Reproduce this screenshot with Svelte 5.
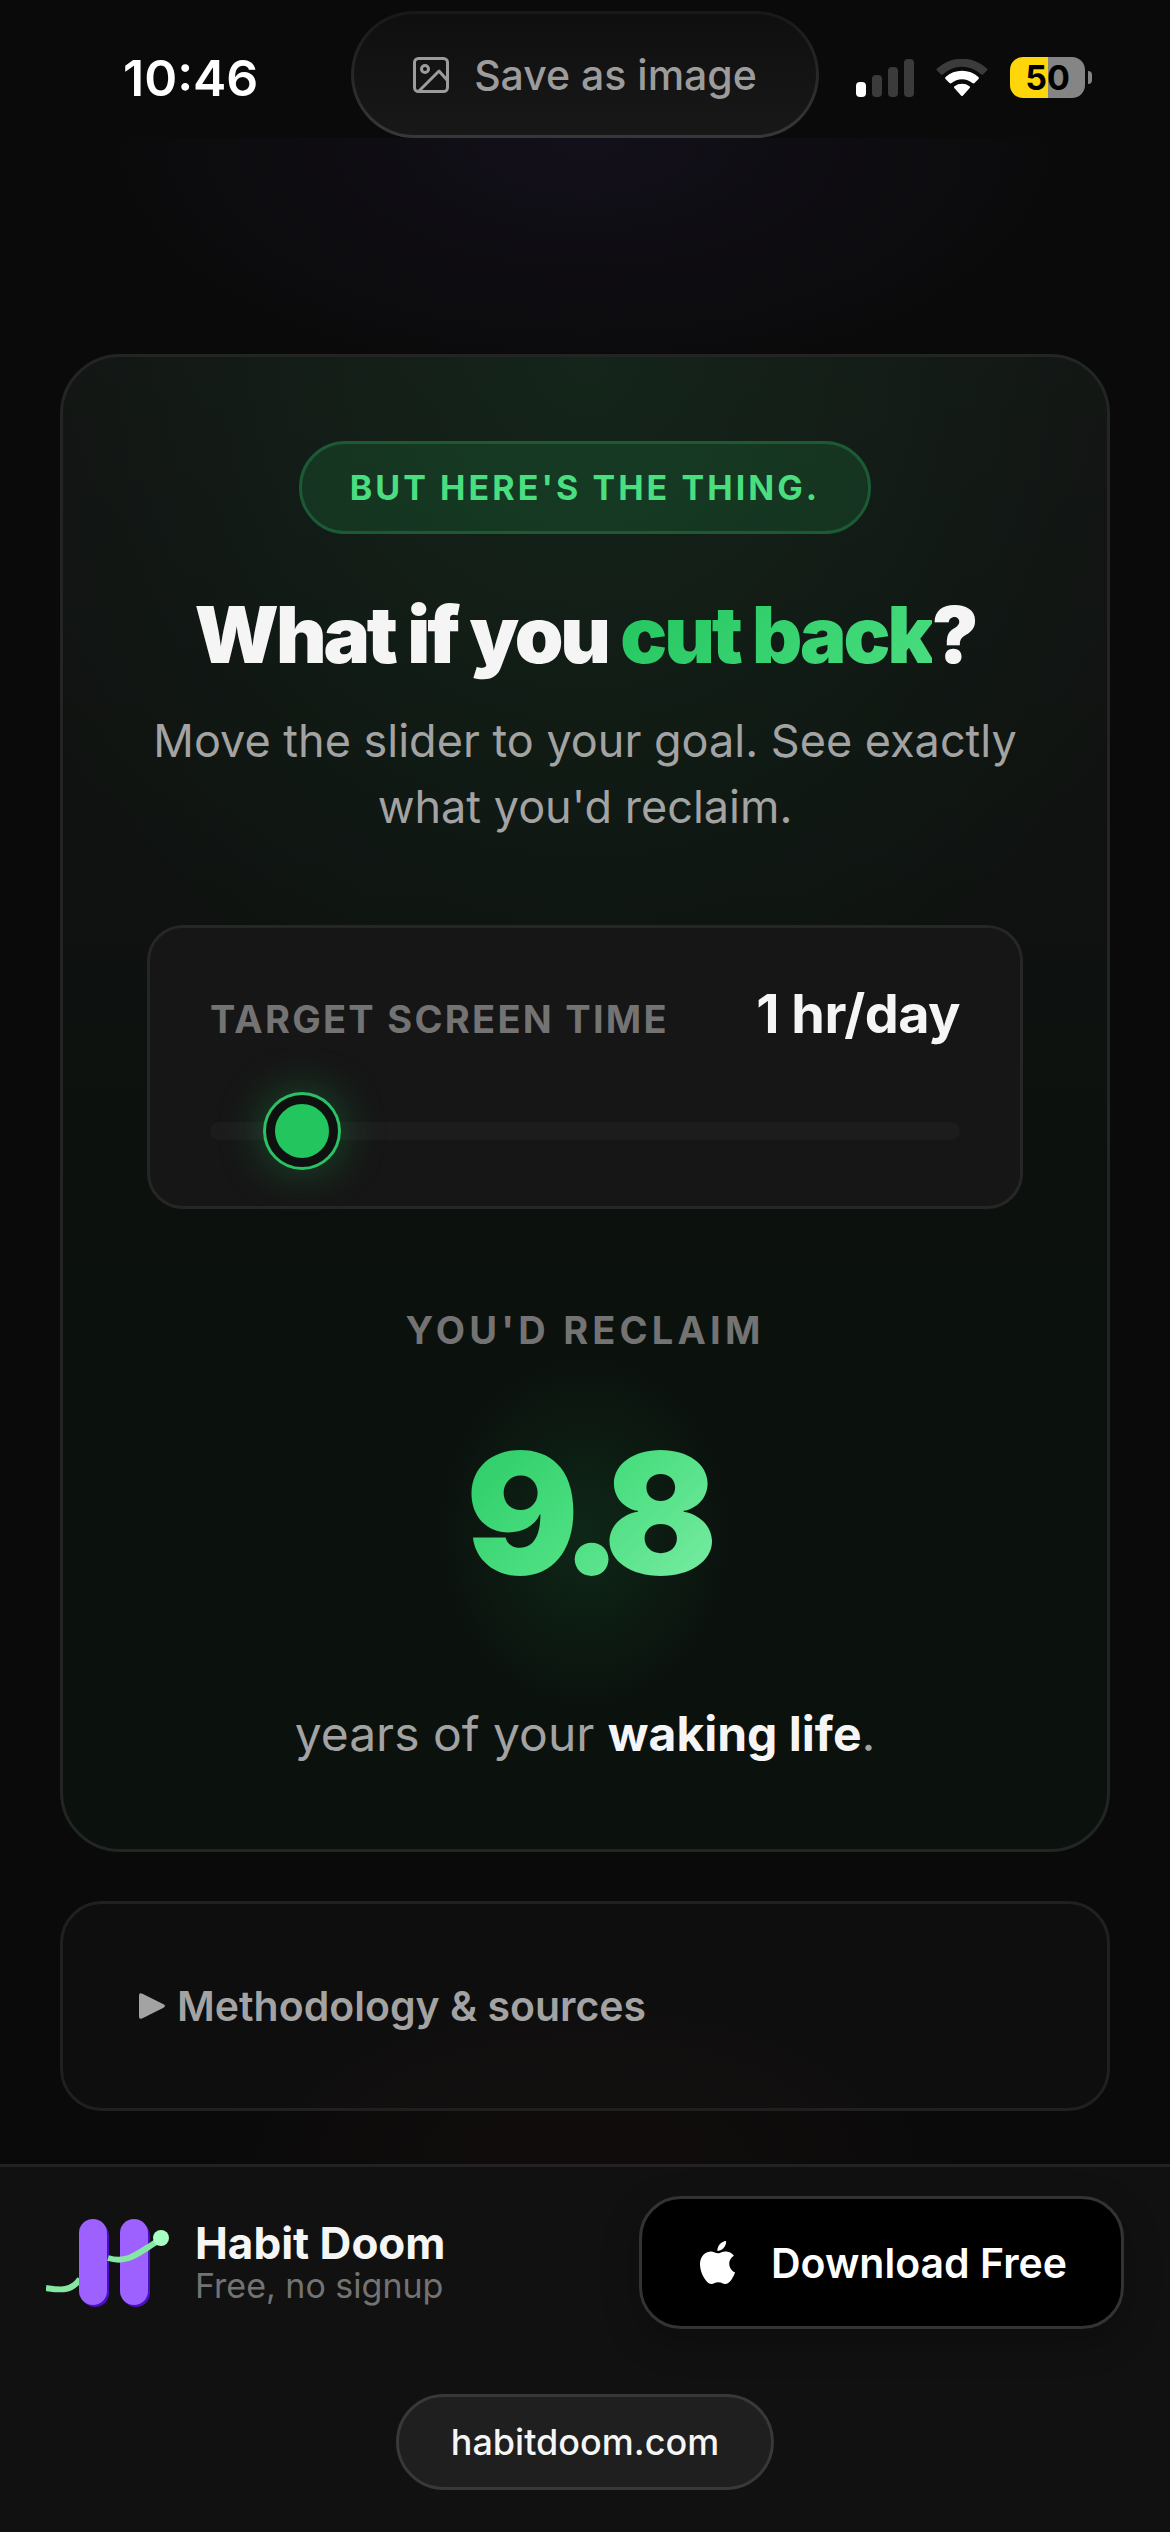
<script>
	let hours = 1;

	const current = 5.1;

	// years of waking life saved, compared with today's average
	$: reclaimed = Math.max(0, (current - hours) * 2.39).toFixed(1);
</script>

<style>
	:global(body) {
		margin: 0;
		background: #0a0a0a;
	}
	.page {
		display: flex;
		flex-direction: column;
		min-height: 100vh;
		font-family: Inter, "Liberation Sans", sans-serif;
		color: #f5f5f5;
	}

	/* Status bar */
	.status {
		display: grid;
		grid-template-columns: 1fr auto 1fr;
		align-items: center;
		padding-top: 11px;
	}
	.status-time {
		padding: 6px 0 0 123px;
		font-size: 50px;
		line-height: 60px;
		font-weight: 600;
		color: #fff;
	}
	.status-icons {
		display: flex;
		align-items: center;
		justify-content: flex-end;
		gap: 22px;
		padding: 6px 78px 0 0;
	}
	.status-icons svg {
		display: block;
	}
	.battery {
		display: flex;
		align-items: center;
		gap: 3px;
	}
	.battery-body {
		width: 75px;
		border-radius: 13px;
		background: linear-gradient(90deg, #ffd60a 51%, #858585 51%);
		color: #000;
		font-size: 34px;
		line-height: 41px;
		font-weight: 700;
		text-align: center;
	}
	.battery-tip {
		width: 4px;
		height: 13px;
		border-radius: 0 6px 6px 0;
		background: #858585;
	}
	.save {
		display: flex;
		align-items: center;
		gap: 25px;
		height: 127px;
		padding: 0 59px;
		border: 3px solid transparent;
		border-radius: 64px;
		background:
			linear-gradient(#0f0f0f, #181818) padding-box,
			linear-gradient(#181818, #383838) border-box;
		color: #9c9c9c;
		font-family: inherit;
		font-size: 41px;
		font-weight: 500;
	}

	/* Main */
	.main {
		flex: 1;
		padding: 216px 60px 53px;
		background:
			radial-gradient(ellipse 42% 250px at 50% 0, rgba(139, 92, 246, .07), transparent),
			radial-gradient(ellipse 34% 200px at 50% 100%, rgba(239, 68, 68, .03), transparent);
	}
	.card {
		display: flex;
		flex-direction: column;
		align-items: center;
		padding: 84px;
		border: 3px solid #222524;
		border-radius: 60px;
		background:
			radial-gradient(ellipse 60% 50% at 50% 0, rgba(34, 197, 94, .1), transparent),
			linear-gradient(#131313, #0c110e 55%, #0b110d);
		text-align: center;
	}
	.badge {
		padding: 21px 48px;
		border: 3px solid #1b5a35;
		border-radius: 48px;
		background: rgba(34, 197, 94, .15);
		color: #4ade80;
		font-size: 34px;
		line-height: 45px;
		font-weight: 700;
		letter-spacing: .09em;
	}
	.title {
		margin: 56px 0 0;
		font-size: 78px;
		line-height: 90px;
		font-weight: 900;
		letter-spacing: -.04em;
	}
	.title-accent {
		background: linear-gradient(135deg, #22c55e, #4ade80);
		background-clip: text;
		color: transparent;
	}
	.lead {
		margin: 28px 0 85px;
		color: #a3a3a3;
		font-size: 45px;
		line-height: 66px;
	}
	.target {
		box-sizing: border-box;
		width: 100%;
		padding: 60px 60px 66px;
		border: 3px solid #262626;
		border-radius: 36px;
		background: #161616;
	}
	.target-row {
		display: flex;
		align-items: baseline;
		justify-content: space-between;
		height: 52px;
		line-height: 52px;
	}
	.label {
		color: #737373;
		font-size: 38px;
		font-weight: 700;
		letter-spacing: .06em;
	}
	.target-value {
		font-size: 54px;
		font-weight: 700;
		letter-spacing: -.01em;
	}
	.slider {
		display: block;
		appearance: none;
		width: 100%;
		height: 18px;
		margin: 82px 0 0;
		border-radius: 9px;
		background: #1c1c1c;
		outline: none;
	}
	.slider::-webkit-slider-thumb {
		appearance: none;
		box-sizing: border-box;
		width: 72px;
		height: 72px;
		border: 9px solid #0f1110;
		border-radius: 50%;
		background: #22c55e;
		box-shadow: 0 0 0 3px #2bc266, 0 0 48px rgba(34, 197, 94, .4);
	}
	.result-label {
		margin-top: 99px;
		line-height: 44px;
		letter-spacing: .11em;
	}
	.result {
		padding: 77px 50px 106px;
		background: radial-gradient(ellipse 150px 180px at 50% 52%, rgba(34, 197, 94, .12), transparent);
	}
	.result-number {
		padding: 0 50px;
		background: linear-gradient(135deg, #22c55e, #4ade80 50%, #86efac);
		background-clip: text;
		color: transparent;
		font-size: 168px;
		line-height: 168px;
		font-weight: 900;
		letter-spacing: -.08em;
	}
	.result-note {
		margin: 0;
		color: #a3a3a3;
		font-size: 48px;
		line-height: 62px;
	}
	.result-note strong {
		color: #f5f5f5;
		font-weight: 700;
	}
	.sources {
		margin-top: 49px;
		padding: 72px;
		border: 3px solid #202020;
		border-radius: 42px;
		background: rgba(255, 255, 255, .02);
		color: #a3a3a3;
		font-size: 41px;
		line-height: 60px;
	}
	.sources summary {
		display: flex;
		align-items: center;
		gap: 10px;
		font-weight: 600;
		list-style: none;
	}

	/* Bottom bar */
	.bar {
		padding: 29px 46px 42px;
		border-top: 3px solid #222;
		background: #111;
	}
	.bar-row {
		display: flex;
		align-items: center;
		justify-content: space-between;
	}
	.brand {
		display: flex;
		align-items: center;
		gap: 25px;
	}
	.brand-name {
		font-size: 44px;
		line-height: 46px;
		font-weight: 700;
	}
	.brand-note {
		color: #737373;
		font-size: 34px;
		line-height: 40px;
	}
	.download {
		display: flex;
		align-items: center;
		gap: 32px;
		box-sizing: border-box;
		height: 133px;
		padding: 0 54px;
		border: 3px solid #333;
		border-radius: 42px;
		background: #000;
		box-shadow: 0 12px 36px rgba(0, 0, 0, .25);
		color: #fff;
		font-size: 41px;
		font-weight: 600;
		text-decoration: none;
	}
	.site {
		display: block;
		width: fit-content;
		margin: 65px auto 0;
		padding: 0 52px;
		border: 3px solid #383838;
		border-radius: 48px;
		background: #1f1f1f;
		color: #f5f5f5;
		font-size: 36px;
		line-height: 90px;
		font-weight: 500;
		text-decoration: none;
	}
</style>

<div class="page">
	<!--Status bar-->
	<header class="status">
		<div class="status-time">10:46</div>
		<button class="save" type="button">
			<svg width="36" height="38" viewBox="0 0 36 38" fill="none" stroke="currentColor" stroke-width="3" stroke-linejoin="round" aria-hidden="true">
				<rect x="1.5" y="2.5" width="33" height="33" rx="4" />
				<circle cx="12" cy="13" r="3.5" />
				<path d="M34 24 26 15 6 35" />
			</svg>
			Save as image
		</button>
		<div class="status-icons">
			<svg width="58" height="38" viewBox="0 0 58 38" aria-hidden="true">
				<rect x="0" y="23" width="10" height="15" rx="4" fill="#fff" />
				<rect x="16" y="16" width="10" height="22" rx="4" fill="#3b3b3b" />
				<rect x="32" y="8" width="10" height="30" rx="4" fill="#3b3b3b" />
				<rect x="48" y="0" width="10" height="38" rx="4" fill="#3b3b3b" />
			</svg>
			<svg width="52" height="38" viewBox="0 0 52 38" aria-hidden="true">
				<path d="M0.8 11.2Q0 10.3 1 9.4A37 37 0 0 1 51 9.4Q52 10.3 51.2 11.2L47 15.4Q46 16.2 45 15.3A28 28 0 0 0 7 15.3Q6 16.2 5 15.4Z" fill="#3b3b3b" />
				<path d="M9.5 20Q8.5 19 9.6 18A24.5 24.5 0 0 1 42.4 18Q43.5 19 42.5 20L38.5 24Q37.5 24.9 36.4 24A16 16 0 0 0 15.6 24Q14.5 24.9 13.5 24Z" fill="#fff" />
				<path d="M18.3 29Q17.4 28 18.5 27.2A13 13 0 0 1 33.5 27.2Q34.6 28 33.7 29L27 36.5Q26 37.5 25 36.5Z" fill="#fff" />
			</svg>
			<div class="battery">
				<div class="battery-body">50</div>
				<div class="battery-tip"></div>
			</div>
		</div>
	</header>

	<!--Main-->
	<main class="main">
		<section class="card">
			<div class="badge">BUT HERE'S THE THING.</div>
			<h1 class="title">What if you <span class="title-accent">cut back</span>?</h1>
			<p class="lead">Move the slider to your goal. See exactly what you'd reclaim.</p>
			<div class="target">
				<div class="target-row">
					<label class="label" for="target">TARGET SCREEN TIME</label>
					<output class="target-value" for="target">{hours} hr/day</output>
				</div>
				<input class="slider" id="target" type="range" min="0" max="12" bind:value={hours}>
			</div>
			<div class="label result-label">YOU'D RECLAIM</div>
			<div class="result">
				<div class="result-number">{reclaimed}</div>
			</div>
			<p class="result-note">years of your <strong>waking life</strong>.</p>
		</section>

		<details class="sources">
			<summary>
				<svg width="32" height="28" viewBox="0 0 32 28" fill="currentColor" aria-hidden="true">
					<path d="M4 3.5Q4 0 7.5 1.8L28.5 12.3Q31.5 14 28.5 15.7L7.5 26.2Q4 28 4 24.5Z" />
				</svg>
				Methodology &amp; sources
			</summary>
		</details>
	</main>

	<!--Bottom bar-->
	<footer class="bar">
		<div class="bar-row">
			<div class="brand">
				<svg width="124" height="88" viewBox="0 0 124 88" fill="none" aria-hidden="true">
					<rect x="35" y="3" width="28" height="85" rx="14" fill="#4c10c4" />
					<rect x="76" y="3" width="28" height="85" rx="14" fill="#4c10c4" />
					<path d="M0 69C14 71 25 73 34 60" stroke="#86e7a4" stroke-width="6" />
					<rect x="33" y="0" width="28" height="86" rx="14" fill="#9d61ff" />
					<rect x="74" y="0" width="28" height="86" rx="14" fill="#9d61ff" />
					<path d="M62 39C82 45 92 34 112 22" stroke="#86e7a4" stroke-width="6" />
					<circle cx="115" cy="19" r="8" fill="#a7ffc4" />
				</svg>
				<div>
					<div class="brand-name">Habit Doom</div>
					<div class="brand-note">Free, no signup</div>
				</div>
			</div>
			<a class="download" href="#download">
				<svg width="43" height="43" viewBox="0 0 24 24" fill="currentColor" aria-hidden="true">
					<path d="M12.152 6.896c-.948 0-2.415-1.078-3.96-1.04-2.04.027-3.91 1.183-4.961 3.014-2.117 3.675-.546 9.103 1.519 12.09 1.013 1.454 2.208 3.09 3.792 3.039 1.52-.065 2.09-.987 3.935-.987 1.831 0 2.35.987 3.96.948 1.637-.026 2.676-1.48 3.676-2.948 1.156-1.688 1.636-3.325 1.662-3.415-.039-.013-3.182-1.221-3.22-4.857-.026-3.04 2.48-4.494 2.597-4.559-1.429-2.09-3.623-2.324-4.39-2.376-2-.156-3.675 1.09-4.61 1.09zM15.53 3.83c.843-1.012 1.4-2.427 1.245-3.83-1.207.052-2.662.805-3.532 1.818-.78.896-1.454 2.338-1.273 3.714 1.338.104 2.715-.688 3.559-1.701" />
				</svg>
				Download Free
			</a>
		</div>
		<a class="site" href="#top">habitdoom.com</a>
	</footer>
</div>
